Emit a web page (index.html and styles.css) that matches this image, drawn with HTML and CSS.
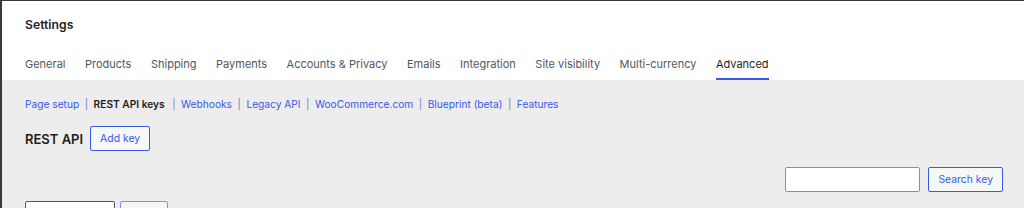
FILE: index.html
```html
<!DOCTYPE html>
<html lang="en">
<head>
<meta charset="UTF-8">
<title>Settings ‹ Advanced</title>
<link rel="stylesheet" href="styles.css">
</head>
<body>
	<div class="Frame">
		<div class="Header">
			<h1 class="HeaderTitle">Settings</h1>
			<nav class="Tabs">
				<a class="Tab" href="#">General</a>
				<a class="Tab" href="#">Products</a>
				<a class="Tab" href="#">Shipping</a>
				<a class="Tab" href="#">Payments</a>
				<a class="Tab" href="#">Accounts &amp; Privacy</a>
				<a class="Tab" href="#">Emails</a>
				<a class="Tab" href="#">Integration</a>
				<a class="Tab" href="#">Site visibility</a>
				<a class="Tab" href="#">Multi-currency</a>
				<a class="Tab TabActive" href="#">Advanced</a>
			</nav>
		</div>
		<div class="Content">
			<ul class="SubNav">
				<li><a href="#">Page setup</a></li>
				<li class="Sep">|</li>
				<li class="Current">REST API keys</li>
				<li class="Sep">|</li>
				<li><a href="#">Webhooks</a></li>
				<li class="Sep">|</li>
				<li><a href="#">Legacy API</a></li>
				<li class="Sep">|</li>
				<li><a href="#">WooCommerce.com</a></li>
				<li class="Sep">|</li>
				<li><a href="#">Blueprint (beta)</a></li>
				<li class="Sep">|</li>
				<li><a href="#">Features</a></li>
			</ul>
			<div class="TitleRow">
				<h2 class="PageTitle">REST API</h2>
				<button class="Button">Add key</button>
			</div>
			<div class="SearchRow">
				<input class="SearchInput" type="search">
				<button class="Button">Search key</button>
			</div>
			<div class="BulkRow">
				<select class="BulkSelect"></select>
				<button class="Button BulkApply"></button>
			</div>
		</div>
	</div>
</body>
</html>
```

FILE: styles.css
```css
html, body {
	margin: 0;
	padding: 0;
	height: 100%;
	overflow: hidden;
}

body {
	background-color: #ededed;
	font-family: Inter, "Liberation Sans", sans-serif;
	color: #1e1e1e;
}

.Frame {
	height: 100%;
	border-top: 1px solid #3a3a3a;
	border-left: 2px solid #3a3a3a;
	background-color: #ededed;
}

.Header {
	background-color: #fff;
	padding: 0 23px;
}

.HeaderTitle {
	margin: 0;
	height: 47px;
	line-height: 47px;
	font-size: 12.2px;
	font-weight: 600;
}

.Tabs {
	display: flex;
	gap: 19.5px;
	height: 32px;
}

.Tab {
	font-size: 11px;
	color: #50575e;
	text-decoration: none;
	line-height: 32px;
	border-bottom: 2px solid transparent;
	height: 30px;
}

.TabActive {
	color: #1e1e1e;
	border-bottom-color: #3858e9;
}

.Content {
	padding: 0 21px 0 23px;
}

.SubNav {
	list-style: none;
	margin: 0;
	padding: 16px 0 0;
	display: flex;
	gap: 5.5px;
	font-size: 10.2px;
	line-height: 16px;
}

.SubNav a {
	color: #3858e9;
	text-decoration: none;
}

.SubNav .Sep {
	color: #6c7fcf;
}

.SubNav .Current {
	font-weight: 600;
	margin-right: 2px;
}

.TitleRow {
	display: flex;
	align-items: center;
	gap: 7px;
	margin-top: 14px;
}

.PageTitle {
	margin: 0;
	font-size: 13px;
	font-weight: 600;
}

.Button {
	font-family: inherit;
	font-size: 10.4px;
	color: #3858e9;
	background-color: #f6f7f7;
	border: 1px solid #3858e9;
	border-radius: 2px;
	height: 25px;
	padding: 0 9px;
}

.SearchRow {
	display: flex;
	justify-content: flex-end;
	gap: 8px;
	margin-top: 16px;
}

.SearchInput {
	width: 135px;
	height: 25px;
	box-sizing: border-box;
	border: 1px solid #8c8f94;
	border-radius: 2px;
	background-color: #fff;
}

.BulkRow {
	display: flex;
	gap: 5px;
	margin-top: 9px;
}

.BulkSelect {
	width: 90px;
	height: 25px;
	border: 1px solid #50575e;
	border-radius: 2px;
	background-color: #fff;
}

.BulkApply {
	width: 48px;
	border-color: #7f8fdc;
}
```
